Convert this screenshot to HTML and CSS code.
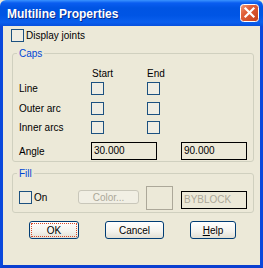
FILE: index.html
```html
<!DOCTYPE html>
<html>
<head>
<meta charset="utf-8">
<link rel="stylesheet" href="styles.css">
</head>
<body>
<div class="window">
  <div class="titlebar">
    <span class="title">Multiline Properties</span>
    <span class="close">
      <svg width="19" height="18" viewBox="0 0 19 18">
        <defs>
          <linearGradient id="cg" x1="0" y1="0" x2="1" y2="1">
            <stop offset="0" stop-color="#f0a07e"/>
            <stop offset="0.35" stop-color="#e1603a"/>
            <stop offset="1" stop-color="#c4401a"/>
          </linearGradient>
        </defs>
        <rect x="0.5" y="0.5" width="18" height="17" rx="3" fill="url(#cg)" stroke="#fff"/>
        <path d="M5.5 4.5 L13.5 12.5 M13.5 4.5 L5.5 12.5" stroke="#fff" stroke-width="2.2" stroke-linecap="square"/>
      </svg>
    </span>
  </div>
  <div class="frame">
    <div class="toprow"><span class="cb"></span><span class="cbtext">Display joints</span></div>

    <fieldset class="group caps">
      <legend>Caps</legend>
      <div class="row head"><span class="lbl"></span><span class="col1">Start</span><span>End</span></div>
      <div class="row r-line"><span class="lbl">Line</span><span class="cb c1"></span><span class="cb"></span></div>
      <div class="row r-outer"><span class="lbl">Outer arc</span><span class="cb c1"></span><span class="cb"></span></div>
      <div class="row r-inner"><span class="lbl">Inner arcs</span><span class="cb c1"></span><span class="cb"></span></div>
      <div class="row r-angle"><span class="lbl">Angle</span><span class="input">30.000</span><span class="input i2">90.000</span></div>
    </fieldset>

    <fieldset class="group fill">
      <legend>Fill</legend>
      <div class="fillrow">
        <div class="oncell"><span class="cb"></span><span class="ontext">On</span></div>
        <span class="btn disabled">Color...</span>
        <span class="swatch"></span>
        <span class="input byblock">BYBLOCK</span>
      </div>
    </fieldset>

    <div class="buttons">
      <span class="btn push ok">OK</span>
      <span class="btn push cancel">Cancel</span>
      <span class="btn push help"><u>H</u>elp</span>
    </div>
  </div>
</div>
</body>
</html>
```
FILE: styles.css
```css
html, body {
  margin: 0;
  padding: 0;
  background: #ece9d8;
}
.window {
  width: 263px;
  height: 268px;
  display: flex;
  flex-direction: column;
  font-family: "Liberation Sans", Arial, sans-serif;
  font-size: 10px;
  color: #000;
}
.titlebar {
  height: 26px;
  flex: none;
  display: flex;
  align-items: flex-start;
  justify-content: space-between;
  background: linear-gradient(#3a93ff 0, #0a5df0 3px, #0054e3 8px, #0055e5 60%, #0a5fee 85%, #0650de 100%);
  border-radius: 6px 6px 0 0;
}
.title {
  color: #fff;
  font-weight: bold;
  font-size: 12px;
  line-height: 14px;
  margin: 7px 0 0 7px;
  text-shadow: 1px 1px 0 #0a2a8c;
}
.close {
  display: block;
  width: 19px;
  height: 18px;
  margin: 4px 4px 0 0;
}
.close svg { display: block; }
.frame {
  flex: 1;
  border-left: 3px solid #0a48dc;
  border-right: 3px solid #0a48dc;
  border-bottom: 3px solid #0a3fd0;
  padding: 3px 0 0 8px;
  background: #ece9d8;
}
.toprow {
  display: flex;
  align-items: center;
  height: 13px;
}
.cb {
  display: block;
  flex: none;
  width: 13px;
  height: 13px;
  box-sizing: border-box;
  border: 1px solid #1c5180;
  background: #efede3;
}
.cbtext {
  margin-left: 2px;
  line-height: 13px;
}
.group {
  margin: 0 0 0 1px;
  padding: 0 0 1px 0;
  width: 242px;
  box-sizing: border-box;
  border: 1px solid #d0d0bf;
  border-radius: 3px;
  min-width: 0;
}
.group legend {
  color: #0046d5;
  line-height: 13px;
  padding: 0 2px;
  margin-left: 4px;
}
.caps { margin-top: 5px; }
.row {
  display: flex;
  align-items: center;
  padding-left: 6px;
  height: 13px;
}
.lbl {
  width: 72px;
  flex: none;
}
.head { margin-top: 7px; }
.col1 {
  width: 55px;
  padding-left: 1px;
  flex: none;
}
.c1 { margin-right: 43px; }
.r-line { margin-top: 2px; }
.r-outer { margin-top: 7px; }
.r-inner { margin-top: 6px; }
.r-angle { margin-top: 8px; height: 18px; }
.input {
  display: block;
  flex: none;
  width: 66px;
  height: 18px;
  box-sizing: border-box;
  border: 1px solid #000;
  padding-left: 2px;
  line-height: 16px;
}
.i2 { margin-left: 24px; }
.fill {
  margin-top: 5px;
  padding-bottom: 2px;
}
.fillrow {
  display: flex;
  align-items: flex-start;
  padding-left: 6px;
  margin-top: 6px;
  height: 24px;
}
.oncell {
  width: 59px;
  flex: none;
  display: flex;
  align-items: center;
  margin-top: 5px;
}
.ontext {
  margin-left: 2px;
  line-height: 13px;
}
.btn {
  display: flex;
  align-items: center;
  justify-content: center;
  box-sizing: border-box;
  flex: none;
  border-radius: 3px;
}
.disabled {
  width: 61px;
  height: 14px;
  margin-top: 4px;
  border: 1px solid #c9c7ba;
  color: #aca899;
  background: #f1efe4;
}
.swatch {
  display: block;
  flex: none;
  width: 27px;
  height: 24px;
  box-sizing: border-box;
  margin-left: 7px;
  border: 1px solid #aca899;
}
.byblock {
  margin-left: 8px;
  margin-top: 5px;
  color: #aca899;
}
.buttons {
  display: flex;
  margin-top: 8px;
}
.push {
  height: 18px;
  border: 1px solid #003c74;
  background: linear-gradient(#ffffff, #f3f2ec 60%, #e2dfd4);
  margin-left: 26px;
}
.ok {
  width: 50px;
  margin-left: 18px;
  outline: 1px dotted #d6492a;
  outline-offset: -3px;
}
.cancel { width: 59px; }
.help { width: 46px; }
.help u { text-decoration: underline; }
```
